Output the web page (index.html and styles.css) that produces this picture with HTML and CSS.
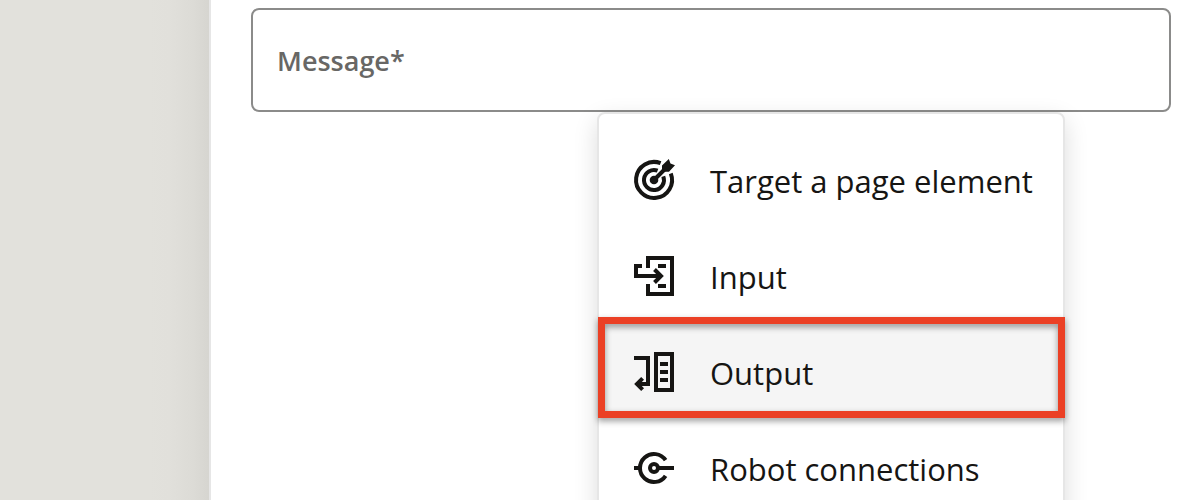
FILE: index.html
```html
<!DOCTYPE html>
<html lang="en">
<head>
<meta charset="utf-8">
<meta name="viewport" content="width=device-width, initial-scale=1">
<title>Message</title>
<link rel="stylesheet" href="styles.css">
</head>
<body class="page">
  <aside class="rail"></aside>
  <main class="panel">
    <div class="field">
      <input class="field-input" id="message" type="text" required>
      <label class="field-label" for="message">Message*</label>
      <div class="menu" role="menu">
        <button class="menu-item" type="button" role="menuitem">
          <svg class="icon" viewBox="0 0 48 48" aria-hidden="true">
            <path class="line" d="M30.6 7.2A18 18 0 1 0 40.8 17.4M27.6 14.7A10 10 0 1 0 33.3 20.4M24 24L37 11"/>
            <circle cx="24" cy="24" r="4.3"/>
            <path d="M32 9.5L38.8 3L40.5 7.5L45 9.2L39 15.8L34.5 15.8L32 13.8Z"/>
          </svg>
          <span class="menu-text">Target a page element</span>
        </button>
        <button class="menu-item" type="button" role="menuitem">
          <svg class="icon" viewBox="0 0 48 48" aria-hidden="true">
            <path class="line" d="M18 16V6H42V42H18V32M12 14H6V24H30M28 14H36M28 34H36"/>
            <path class="line" d="M24.5 17.5L31 24L24.5 30.5"/>
          </svg>
          <span class="menu-text">Input</span>
        </button>
        <button class="menu-item menu-item-active" type="button" role="menuitem">
          <svg class="icon" viewBox="0 0 48 48" aria-hidden="true">
            <path class="line" d="M4 10H18V36H8M12.6 30.4L7 36L12.6 41.6M26 6H42V42H26ZM30 16H38M30 24H38M30 32H38"/>
          </svg>
          <span class="menu-text">Output</span>
        </button>
        <button class="menu-item" type="button" role="menuitem">
          <svg class="icon" viewBox="0 0 48 48" aria-hidden="true">
            <path class="line" d="M35.6 16.2A14 14 0 1 0 35.6 31.8M4 24H10M28 24H44"/>
            <circle class="line" cx="24" cy="24" r="4"/>
          </svg>
          <span class="menu-text">Robot connections</span>
        </button>
      </div>
    </div>
  </main>
</body>
</html>
```
FILE: styles.css
```css
* {
  box-sizing: border-box;
}

.page {
  display: grid;
  grid-template-columns: 211px 1fr;
  height: 100vh;
  margin: 0;
  overflow: hidden;
  background: #fff;
  color: #161513;
  font-family: "Open Sans", "Noto Sans", sans-serif;
}

.rail {
  border-right: 2px solid #e6e6e6;
  background: linear-gradient(to left, #d6d5d0, #dcdbd6 16px, #e1e0db 40px, #e2e1dc 60px);
}

.panel {
  padding: 8px 9px 0 40px;
}

.field {
  position: relative;
}

.field-input {
  display: block;
  width: 100%;
  height: 104px;
  padding: 0 24px;
  border: 2px solid #8b8b8a;
  border-radius: 8px;
  background: #fff;
  color: inherit;
  font: inherit;
  font-size: 27px;
}

.field-label {
  position: absolute;
  top: 33px;
  left: 26px;
  color: #686765;
  font-size: 27px;
  font-weight: 600;
  line-height: 40px;
}

.menu {
  position: absolute;
  top: 100%;
  right: 106px;
  width: 468px;
  padding: 14px 0;
  border: 2px solid #e6e6e6;
  border-radius: 8px;
  background: #fff;
  background-clip: padding-box;
  box-shadow: 0 8px 24px rgba(0, 0, 0, 0.14);
}

.menu-item {
  position: relative;
  display: flex;
  align-items: center;
  gap: 32px;
  width: 100%;
  height: 96px;
  padding: 8px 31px 0;
  border: 0;
  background: none;
  color: inherit;
  font: inherit;
  font-size: 31px;
  line-height: 40px;
  text-align: left;
  white-space: nowrap;
}

.menu-text {
  padding-top: 2px;
}

.menu-item-active {
  background: #f5f5f5;
}

.menu-item-active::after {
  position: absolute;
  inset: -3px -2px -2px -1px;
  border: 7px solid #eb4025;
  filter: drop-shadow(0 3px 3px rgba(0, 0, 0, 0.4));
  content: "";
}

.icon {
  flex: none;
  width: 48px;
  height: 48px;
  fill: #161513;
}

.line {
  fill: none;
  stroke: #161513;
  stroke-width: 4;
}
```
